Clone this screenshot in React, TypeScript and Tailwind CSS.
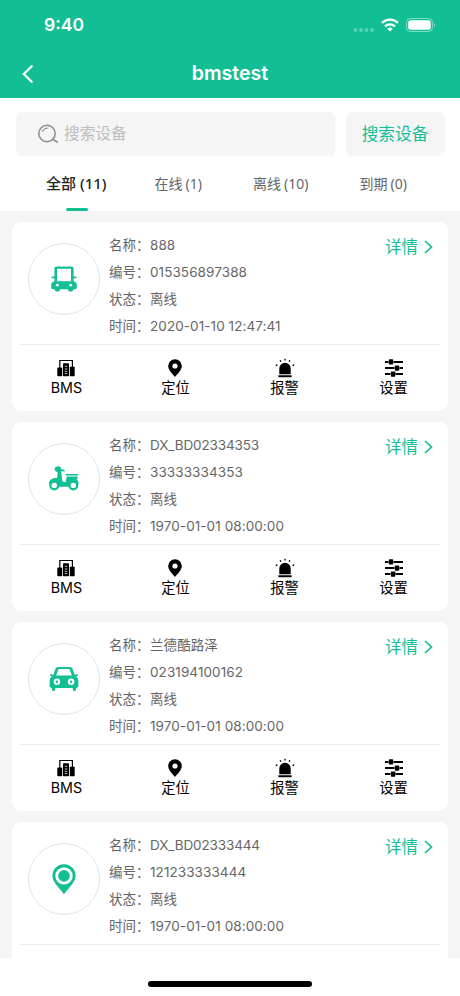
import React, { useState } from 'react';

type DeviceType = 'bus' | 'scooter' | 'car' | 'pin';

interface Device {
  type: DeviceType;
  name: string;
  code: string;
  status: string;
  time: string;
}

const devices: Device[] = [
  { type: 'bus', name: '888', code: '015356897388', status: '离线', time: '2020-01-10 12:47:41' },
  { type: 'scooter', name: 'DX_BD02334353', code: '33333334353', status: '离线', time: '1970-01-01 08:00:00' },
  { type: 'car', name: '兰德酷路泽', code: '023194100162', status: '离线', time: '1970-01-01 08:00:00' },
  { type: 'pin', name: 'DX_BD02333444', code: '121233333444', status: '离线', time: '1970-01-01 08:00:00' },
];

const tabs = [
  { label: '全部', count: 11 },
  { label: '在线', count: 1 },
  { label: '离线', count: 10 },
  { label: '到期', count: 0 },
];

// 设备类型图标
const DeviceIcon: React.FC<{ type: DeviceType }> = ({ type }) => {
  if (type === 'bus') {
    return (
      <svg width="30" height="30" viewBox="0 0 30 30" fill="#12bf94">
        <path fillRule="evenodd" d="M7.600 2.500h14.800a2.200 2.200 0 0 1 2.200 2.200v7.800h2.800v1.800h-2.800v3c1.900.4 3.200 1.700 3.200 3.600v2.600c0 1-.7 1.700-1.800 1.700H24.300v.6c0 1-.7 1.700-1.800 1.700h-1.700c-1 0-1.700-.7-1.700-1.700v-.6h-8.200v.6c0 1-.7 1.700-1.700 1.700H7.500c-1.100 0-1.800-.7-1.800-1.700v-.6H4c-1.100 0-1.800-.7-1.800-1.700v-2.600c0-1.900 1.300-3.200 3.200-3.600v-3H2.600v-1.800h2.800V4.700a2.200 2.200 0 0 1 2.200-2.200ZM8 4.700h14v12.500H8V4.700Z" />
        <circle cx="8.300" cy="21.200" r="1.400" fill="white" />
        <circle cx="21.700" cy="21.200" r="1.400" fill="white" />
      </svg>
    );
  }
  if (type === 'scooter') {
    return (
      <svg width="32" height="30" viewBox="0 0 32 30" fill="#12bf94">
        <path d="M6.800 4.600C7.200 3 8.600 2.300 10.200 2.300c1.900 0 2.900 1 2.800 2.700l3.700 1v1.600l-3.600-.4 1.100 8.500c.2 1.500.8 2.200 2.100 2.200h1.300c.6-3.200 1.200-4.900 1.500-5.300h10.400v2.400l-1 .4c1.500 1 2.200 2.600 2.300 4.800h-2l-2 2.600h-17l-2-2.600H.8c.1-3.200 2-5.400 5-5.900l3.400-.5.500-5.400-2.900-1.800Z" />
        <path d="M17.500 10.100h12.800v1.400H18Z" />
        <circle cx="6.300" cy="21.400" r="5" />
        <circle cx="6.300" cy="21.400" r="2.700" fill="white" />
        <circle cx="25.300" cy="21.400" r="5" />
        <circle cx="25.300" cy="21.400" r="2.700" fill="white" />
      </svg>
    );
  }
  if (type === 'car') {
    return (
      <svg width="30" height="30" viewBox="0 0 30 30" fill="#12bf94">
        <path fillRule="evenodd" d="M9.300 3h11.400c1.500 0 2.500.7 3 2.200l2 5.700 2-.8c.8 0 1.200.4 1.200 1s-.4.900-2 1.500c1.600 1 2.500 2.600 2.500 4.500v4.200c0 1.700-.7 2.600-2.300 2.800v1.300c0 .9-.6 1.500-1.700 1.500-1 0-1.600-.6-1.600-1.500V24H6.200v1.400c0 .9-.6 1.500-1.600 1.500-1.100 0-1.700-.6-1.700-1.500v-1.300C1.300 23.900.6 23 .6 21.300v-4.200c0-1.900.9-3.500 2.500-4.500-1.600-.6-2-.9-2-1.500s.4-1 1.200-1l2 .8 2-5.700C6.800 3.700 7.800 3 9.300 3ZM9.600 4.900 7.100 11.600h15.800l-2.500-6.700H9.600Z" />
        <circle cx="7.900" cy="17.800" r="3.200" fill="white" />
        <circle cx="7.900" cy="17.800" r="1.200" />
        <circle cx="22.100" cy="17.800" r="3.200" fill="white" />
        <circle cx="22.100" cy="17.800" r="1.200" />
      </svg>
    );
  }
  return (
    <svg width="32" height="32" viewBox="0 0 32 32" fill="#12bf94">
      <path d="M16 1.200a11.600 11.600 0 0 0-11.600 11.600c0 6.200 6 11 11.600 18.400 5.600-7.400 11.600-12.200 11.600-18.400A11.600 11.600 0 0 0 16 1.200Z" />
      <circle cx="16" cy="12.900" r="8.700" fill="white" />
      <circle cx="16" cy="12.900" r="5.800" />
    </svg>
  );
};

const BmsIcon = () => (
  <svg width="18" height="18" viewBox="0 0 18 18" className="mr-px">
    <path d="M2.800 9V1.500h12.600V9" fill="none" stroke="black" strokeWidth="1.200" />
    <rect x="0.300" y="8.600" width="4.900" height="8.600" rx="0.800" />
    <rect x="6" y="4.200" width="6" height="13" rx="0.800" />
    <rect x="12.800" y="7.800" width="4.900" height="9.400" rx="0.800" />
    <path d="M7.800 7.300H10.200M7.800 10H10.200M7.800 12.300H10.200M7.800 14.600H10.200" stroke="white" strokeWidth="0.800" />
  </svg>
);

const LocateIcon = () => (
  <svg width="18" height="18" viewBox="0 0 18 18" className="mr-px">
    <path fillRule="evenodd" d="M9 .2a6.800 6.800 0 0 0-6.800 6.800c0 3.900 3.700 7.400 6.800 10.900 3.100-3.500 6.800-7 6.800-10.900A6.800 6.800 0 0 0 9 .2Zm0 4.200a2.600 2.600 0 1 1 0 5.200 2.600 2.600 0 0 1 0-5.200Z" />
  </svg>
);

const AlarmIcon = () => (
  <svg width="20" height="20" viewBox="0 0 20 20">
    <path d="M4.300 16.300V10.500a5.700 5.700 0 0 1 11.400 0v5.800Z" />
    <rect x="3.400" y="17.200" width="13.200" height="2.100" rx="0.300" />
    <path d="M10 .8v1.700M5.100 2.200l.8 1.400M14.900 2.200l-.8 1.400M.8 6.900l1.600.7M19.200 6.900l-1.600.7" stroke="black" strokeWidth="1.300" />
  </svg>
);

const SettingIcon = () => (
  <svg width="20" height="20" viewBox="0 0 20 20">
    <path d="M1 3.900h18M1 10.100h18M1 16.100h18" stroke="black" strokeWidth="2" />
    <path d="M4.400 2.700v2.400M9.600 2.700v2.400M10.400 8.900v2.400M15.600 8.900v2.400M6.500 14.900v2.400M11.700 14.900v2.400" stroke="white" strokeWidth="0.500" />
    <rect x="4.800" y="1.300" width="4.400" height="5.200" rx="0.800" />
    <rect x="10.800" y="7.500" width="4.400" height="5.200" rx="0.800" />
    <rect x="6.900" y="13.500" width="4.400" height="5.200" rx="0.800" />
  </svg>
);

const actions = [
  { label: 'BMS', icon: <BmsIcon /> },
  { label: '定位', icon: <LocateIcon /> },
  { label: '报警', icon: <AlarmIcon /> },
  { label: '设置', icon: <SettingIcon /> },
];

const InfoRow: React.FC<{ label: string; value: string }> = ({ label, value }) => (
  <div className="flex h-[27px] items-center whitespace-nowrap text-[13.5px] text-[#666]">
    <span className="w-[41px]">{label}：</span>
    <span className={value.startsWith('DX') ? '-tracking-[0.13px]' : 'tracking-[0.08px]'}>{value}</span>
  </div>
);

const DeviceCard: React.FC<{ device: Device; showActions: boolean }> = ({ device, showActions }) => (
  <div className="h-[189px] shrink-0 rounded-[9px] bg-white px-2">
    <div className="flex h-[123px] border-b border-[#eee] pl-2 pt-[10px]">
      <div className="mt-[10.500px] flex size-[72px] shrink-0 items-center justify-center rounded-full border border-[#e2e2e2]">
        <DeviceIcon type={device.type} />
      </div>
      <div className="ml-[9px] flex-1">
        <InfoRow label="名称" value={device.name} />
        <InfoRow label="编号" value={device.code} />
        <InfoRow label="状态" value={device.status} />
        <InfoRow label="时间" value={device.time} />
      </div>
      <button className="mr-[7px] mt-[3px] flex h-6 items-center gap-[6px] text-[16.5px] text-[#12bf94]">
        详情
        <svg width="9" height="14" viewBox="0 0 9 14" fill="none" stroke="currentColor" strokeWidth="1.700">
          <path d="m1 1 6.500 6L1 13" />
        </svg>
      </button>
    </div>
    {showActions && (
      <div className="-mx-2 grid grid-cols-4 pt-[13px]">
        {actions.map((action) => (
          <button key={action.label} className="flex flex-col items-center text-[14.300px] leading-[18px] text-black">
            <span className="mb-px flex h-5 items-center">{action.icon}</span>
            {action.label}
          </button>
        ))}
      </div>
    )}
  </div>
);

const App: React.FC = () => {
  const [activeTab, setActiveTab] = useState(0);
  const [keyword, setKeyword] = useState('');

  return (
    <div className="flex h-[996px] w-[460px] flex-col overflow-hidden bg-white font-[Inter,'Noto_Sans_CJK_SC',sans-serif]">
      {/* 状态栏和标题 */}
      <header className="h-[98px] shrink-0 bg-[#12bf94] text-white">
        <div className="flex h-[50px] items-center justify-between pl-11 pr-[24px]">
          <span className="pt-px text-[17.5px] font-semibold">9:40</span>
          <div className="flex items-center">
            <svg width="22" height="6" viewBox="0 0 22 6" fill="white" opacity="0.300" className="mt-[9px]">
              <circle cx="2.500" cy="3" r="1.900" />
              <circle cx="8" cy="3" r="1.900" />
              <circle cx="13.500" cy="3" r="1.900" />
              <circle cx="19" cy="3" r="1.900" />
            </svg>
            <svg width="18" height="14" viewBox="0 0 18 14" fill="none" stroke="white" strokeWidth="2.300" className="ml-[6px]">
              <path d="M1 4.900a11.600 11.600 0 0 1 16 0M4 8.300a7.300 7.300 0 0 1 10 0" />
              <path d="M6.300 10.700a4 4 0 0 1 5.400 0L9 13.500Z" fill="white" stroke="none" />
            </svg>
            <svg width="30" height="14" viewBox="0 0 30 14" className="ml-[7px]">
              <rect x="0.500" y="0.500" width="26" height="13" rx="4" fill="none" stroke="white" strokeOpacity="0.450" />
              <rect x="2.200" y="2.200" width="22.600" height="9.600" rx="2.400" fill="white" />
              <path d="M28 4.900c1.600.7 1.600 3.500 0 4.200Z" fill="white" fillOpacity="0.500" />
            </svg>
          </div>
        </div>
        <div className="grid h-12 grid-cols-[40px_1fr_40px] items-center">
          <button className="pl-[22px]">
            <svg width="12" height="18" viewBox="0 0 12 18" fill="none" stroke="white" strokeWidth="2.200" strokeLinecap="round">
              <path d="M9.700 1.200 1.800 9l7.900 7.800" />
            </svg>
          </button>
          <h1 className="text-center text-[19.500px] font-semibold leading-none">bmstest</h1>
        </div>
      </header>

      {/* 搜索 */}
      <div className="flex shrink-0 gap-[11px] pl-4 pr-[15px] pt-[14px]">
        <div className="flex h-11 flex-1 items-center rounded-md bg-[#f5f5f5] pl-[21px]">
          <svg width="22" height="20" viewBox="0 0 22 20" fill="none" stroke="#868b94" strokeWidth="1.500" strokeLinecap="round">
            <circle cx="10" cy="9.500" r="8.200" />
            <path d="m15.800 15.300 4.500 2.700" />
            <path d="M5.600 7.200c1.200-2.300 3-3.300 5.300-3.200" strokeWidth="1.200" />
          </svg>
          <input
            value={keyword}
            onChange={(e) => setKeyword(e.target.value)}
            placeholder="搜索设备"
            className="ml-[5px] w-40 bg-transparent text-[15.700px] text-[#333] outline-none placeholder:text-[#bdbdbd]"
          />
        </div>
        <button className="h-11 w-[99px] rounded-md bg-[#f5f5f5] pr-px pt-px text-[16.700px] text-[#12bf94]">搜索设备</button>
      </div>

      {/* 分类标签 */}
      <div className="grid h-[55px] shrink-0 grid-cols-4 px-[25px] font-['Noto_Sans','Noto_Sans_CJK_SC',sans-serif]">
        {tabs.map((tab, index) => (
          <button key={tab.label} onClick={() => setActiveTab(index)} className="flex h-[55px] flex-col items-center">
            <span
              className={
                index === activeTab
                  ? 'flex h-[52px] shrink-0 items-center gap-1 pt-[3px] text-[15px] font-medium text-[#222]'
                  : 'flex h-[52px] shrink-0 items-center gap-[3px] pr-px pt-[3px] text-[14px] text-[#666]'
              }
            >
              <span>{tab.label}</span>
              <span>({tab.count})</span>
            </span>
            {index === activeTab && <span className="ml-px h-[3px] w-[22px] shrink-0 rounded-full bg-[#12bf94]" />}
          </button>
        ))}
      </div>

      {/* 设备列表 */}
      <main className="flex h-[747px] shrink-0 flex-col gap-[11px] overflow-hidden bg-[#f5f5f5] px-3 pt-[11px]">
        {devices.map((device, index) => (
          <DeviceCard key={device.name} device={device} showActions={index < devices.length - 1} />
        ))}
      </main>

      <div className="flex flex-1 items-end justify-center pb-[9px]">
        <div className="h-[6px] w-[164px] rounded-full bg-black" />
      </div>
    </div>
  );
};

export default App;
